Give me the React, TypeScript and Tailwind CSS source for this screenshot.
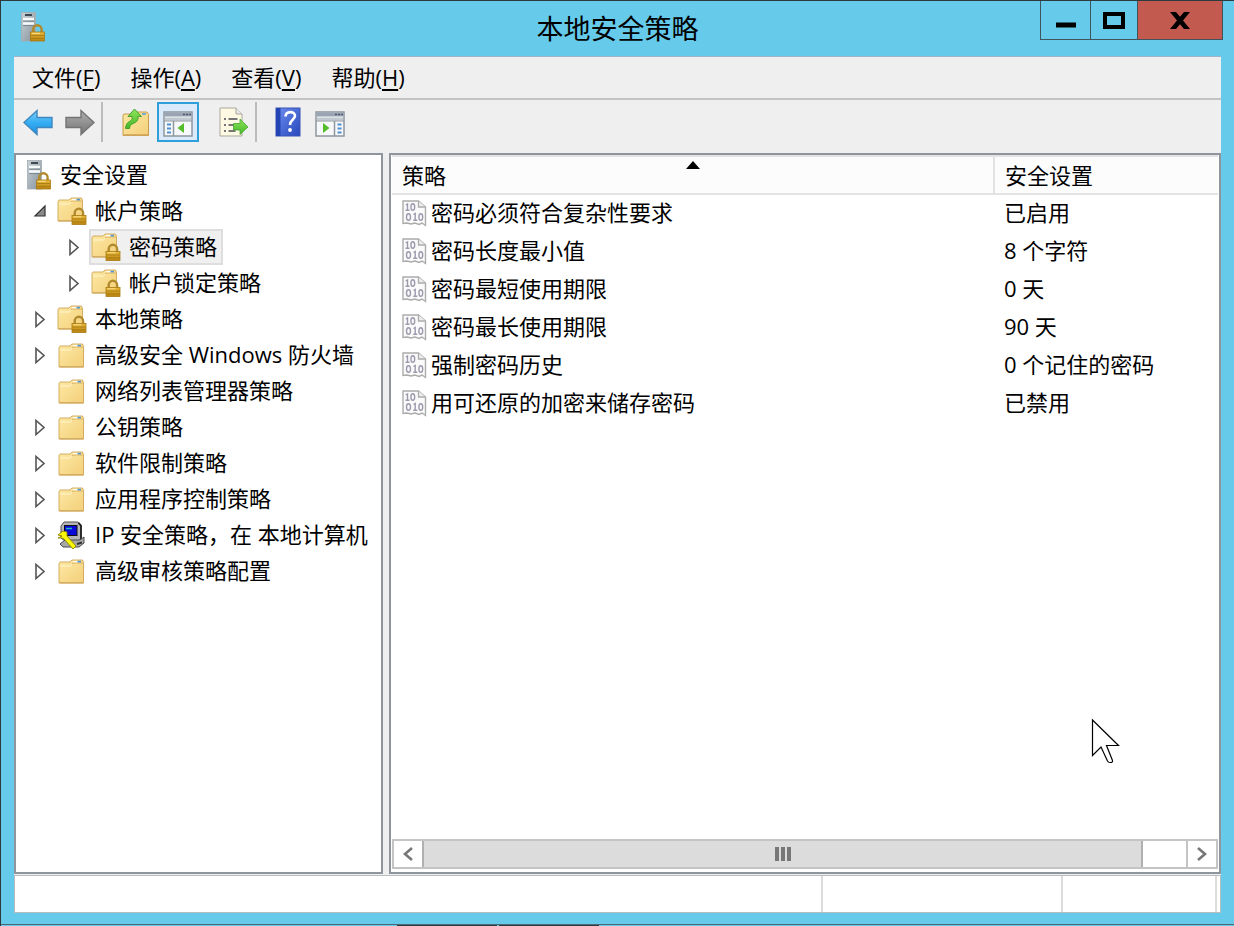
import { useState } from 'react';
import clsx from 'clsx';

type IconKind = 'server' | 'locked' | 'folder' | 'ipsec';

interface TreeNode {
  label: string;
  depth: 0 | 1 | 2;
  icon: IconKind;
  arrow?: 'open' | 'closed';
}

const MENUS = [
  { label: '文件', key: 'F' },
  { label: '操作', key: 'A' },
  { label: '查看', key: 'V' },
  { label: '帮助', key: 'H' },
];

const TREE: TreeNode[] = [
  { label: '安全设置', depth: 0, icon: 'server' },
  { label: '帐户策略', depth: 1, icon: 'locked', arrow: 'open' },
  { label: '密码策略', depth: 2, icon: 'locked', arrow: 'closed' },
  { label: '帐户锁定策略', depth: 2, icon: 'locked', arrow: 'closed' },
  { label: '本地策略', depth: 1, icon: 'locked', arrow: 'closed' },
  { label: '高级安全 Windows 防火墙', depth: 1, icon: 'folder', arrow: 'closed' },
  { label: '网络列表管理器策略', depth: 1, icon: 'folder' },
  { label: '公钥策略', depth: 1, icon: 'folder', arrow: 'closed' },
  { label: '软件限制策略', depth: 1, icon: 'folder', arrow: 'closed' },
  { label: '应用程序控制策略', depth: 1, icon: 'folder', arrow: 'closed' },
  { label: 'IP 安全策略，在 本地计算机', depth: 1, icon: 'ipsec', arrow: 'closed' },
  { label: '高级审核策略配置', depth: 1, icon: 'folder', arrow: 'closed' },
];

const POLICIES = [
  { name: '密码必须符合复杂性要求', value: '已启用' },
  { name: '密码长度最小值', value: '8 个字符' },
  { name: '密码最短使用期限', value: '0 天' },
  { name: '密码最长使用期限', value: '90 天' },
  { name: '强制密码历史', value: '0 个记住的密码' },
  { name: '用可还原的加密来储存密码', value: '已禁用' },
];

// Gradients shared by every icon
function IconDefs() {
  return (
    <svg className="absolute size-0" aria-hidden="true">
      <defs>
        <linearGradient id="gold" x1="0" y1="0" x2="0" y2="1">
          <stop offset="0" stopColor="#e9b93a" />
          <stop offset="1" stopColor="#b8830f" />
        </linearGradient>
        <linearGradient id="paper" x1="0" y1="0" x2="1" y2="1">
          <stop offset="0" stopColor="#fde9a4" />
          <stop offset="1" stopColor="#f3cf7a" />
        </linearGradient>
        <linearGradient id="steel" x1="0" y1="0" x2="1" y2="1">
          <stop offset="0" stopColor="#c9d1d6" />
          <stop offset="1" stopColor="#84919b" />
        </linearGradient>
        <linearGradient id="blue" x1="0" y1="0" x2="0" y2="1">
          <stop offset="0" stopColor="#7fd0fb" />
          <stop offset="0.5" stopColor="#35aef3" />
          <stop offset="1" stopColor="#1c8fe0" />
        </linearGradient>
        <linearGradient id="gray" x1="0" y1="0" x2="0" y2="1">
          <stop offset="0" stopColor="#b0b0b0" />
          <stop offset="1" stopColor="#747474" />
        </linearGradient>
        <linearGradient id="green" x1="0" y1="0" x2="0" y2="1">
          <stop offset="0" stopColor="#8fe45a" />
          <stop offset="1" stopColor="#43b828" />
        </linearGradient>
        <linearGradient id="book" x1="0" y1="0" x2="1" y2="1">
          <stop offset="0" stopColor="#6f8df0" />
          <stop offset="1" stopColor="#2748bd" />
        </linearGradient>
      </defs>
    </svg>
  );
}

function Lock() {
  return (
    <g>
      <path d="M3.2 7V4a4.2 4.2 0 0 1 8.4 0v3" fill="none" stroke="#b08a2c" strokeWidth="2.4" />
      <rect x="0.5" y="6.5" width="14" height="9" fill="url(#gold)" stroke="#a87a14" strokeWidth="0.8" />
      <path d="M1 10h13M1 12.8h13" stroke="#94690c" strokeWidth="0.6" />
      <path d="M2 7.8h8" stroke="#fbe08a" />
    </g>
  );
}

function ServerIcon() {
  return (
    <svg width="26" height="30" viewBox="0 0 26 30" aria-hidden="true">
      <rect x="1.5" y="0.5" width="14" height="28.5" fill="url(#steel)" stroke="#a3adb3" strokeWidth="0.8" />
      <rect x="5" y="2" width="7" height="2" fill="#3d4a50" />
      <path d="M3 7h11M3 11.5h11" stroke="#f7fafb" strokeWidth="2.4" />
      <path d="M3 9.2h11M3 13.6h11" stroke="#6d7a83" strokeWidth="0.8" />
      <g transform="translate(10 13.5)">
        <Lock />
      </g>
    </svg>
  );
}

function FolderIcon({ locked }: { locked?: boolean }) {
  return (
    <svg width="30" height="28" viewBox={locked ? '0 0 30 28' : '-1 -2 30 28'} aria-hidden="true">
      <path d="M1 4.5 2 3h10l2-2h10.5l1 2.5V24H1z" fill="url(#paper)" stroke="#cfa656" strokeWidth="0.9" />
      <path d="M12.5 6.5 15 4h10" fill="none" stroke="#d9b264" />
      <path d="M2.2 7h10.3l1.5-2" fill="none" stroke="#fff6cf" />
      <path d="M15 2.6h5" stroke="#fffdf3" strokeWidth="1.4" />
      <path d="M19.5 2.6h3.5" stroke="#4d97d6" strokeWidth="1.6" />
      <path d="M1.5 23.8h24" stroke="#d2ac62" strokeWidth="1.4" />
      {locked && (
        <g transform="translate(14.5 12)">
          <Lock />
        </g>
      )}
    </svg>
  );
}

function IpsecIcon() {
  return (
    <svg width="30" height="30" viewBox="0 0 30 30" aria-hidden="true">
      <path d="M7 2h14l3 3v14l-3 2H8l-4-3V6z" fill="#b5b5b5" stroke="#555" />
      <path d="M21.5 3 24 5.5V19" fill="none" stroke="#222" strokeWidth="1.8" />
      <rect x="7.5" y="5.5" width="12.5" height="10" fill="#0a0ad8" stroke="#111" />
      <path d="M9 8.5h6" stroke="#20b8c8" strokeWidth="1.5" />
      <path d="M3 24 8 20h15l4-3v6l-5 4H6z" fill="#a8a8a8" stroke="#4a4a4a" />
      <path d="m20 24 5-1.5" stroke="#333" strokeWidth="2" />
      <path d="m1 15 5-4 4 1v4l9 10-3 3L7 19l-2-1H1l4-2z" fill="#fcf607" stroke="#8b8600" strokeWidth="0.9" />
    </svg>
  );
}

function TreeIcon({ kind }: { kind: IconKind }) {
  if (kind === 'server') return <ServerIcon />;
  if (kind === 'ipsec') return <IpsecIcon />;
  return <FolderIcon locked={kind === 'locked'} />;
}

function PolicyIcon() {
  return (
    <svg width="25" height="27" viewBox="0 0 25 27" className="shrink-0" aria-hidden="true">
      <path
        d="M1 1h15.5L23.5 7v18.5L20 23l-3 1.5-4-1.5-4 1-4-1-4 .5z"
        fill="#fafafa"
        stroke="#acacac"
        strokeWidth="1.4"
      />
      <path d="M16.5 1v6h7" fill="#eee" stroke="#acacac" strokeWidth="1.3" />
      <g fill="none" stroke="#9d9aae" strokeWidth="1.4">
        <path d="M3.8 5 5.5 4v6M3.5 10.3h4M11.5 14.5l1.700-1v6.500M11.300 20.300h4" />
        <ellipse cx="10.8" cy="7" rx="1.9" ry="3.2" />
        <ellipse cx="6.5" cy="17" rx="2" ry="3.2" />
        <ellipse cx="18.800" cy="17" rx="1.900" ry="3.200" />
      </g>
    </svg>
  );
}

function ArrowIcon({ forward }: { forward?: boolean }) {
  return (
    <svg width="30" height="28" viewBox="0 0 30 28" aria-hidden="true">
      {forward ? (
        <path d="M1 9.5h15V2.5L29 14.500 16 26.500v-7H1z" fill="url(#gray)" stroke="#737373" strokeWidth="1.4" />
      ) : (
        <path d="M29 9.5H14V2.5L1 14.500l13 12v-7h15z" fill="url(#blue)" stroke="#3f87bd" strokeWidth="1.4" />
      )}
    </svg>
  );
}

function UpIcon() {
  return (
    <svg width="28" height="28" viewBox="0 0 28 28" aria-hidden="true">
      <path d="M1 6 2 5h10l2-2h11l1.500 2.500V26.500H1z" fill="url(#paper)" stroke="#c79c4c" />
      <path d="M20 5h4" stroke="#5aa0dd" strokeWidth="1.6" />
      <path d="M1.500 26h25" stroke="#d0a55a" strokeWidth="1.6" />
      <path
        d="M12.500 0 19.500 7.500l-3.500-.3c.5 5-2 6-5 7.300-2 1-3 2-3.500 5H3.500c.5-4.500 2-6 4-7 2-1.200 3-2 2.500-5L6 7.500z"
        fill="url(#green)"
        stroke="#3c9a28"
        strokeWidth="0.9"
      />
    </svg>
  );
}

function PaneIcon({ side }: { side: 'left' | 'right' }) {
  return (
    <svg width="30" height="26" viewBox="0 0 30 26" aria-hidden="true">
      <rect x="1" y="1" width="28" height="24" fill="#f6f8fa" stroke="#8f979f" strokeWidth="1.5" />
      <rect x="1.5" y="1.5" width="27" height="4" fill="#98a3b3" />
      <path d="M20 3.5h2M23 3.5h2M26 3.5h2" stroke="#4d5a6b" strokeWidth="1.6" />
      <path d="M2 8h26" stroke="#c1c8d0" strokeWidth="3" />
      <path d="M1 10h28" stroke="#8f979f" />
      {side === 'left' ? (
        <>
          <path d="M10.5 10v15" stroke="#8f979f" strokeWidth="1.5" />
          <path d="M4 13.5h4M4 17.5h4M4 21.500h4" stroke="#4d8fd0" strokeWidth="1.8" />
          <path d="M21 12v10l-6.500-5z" fill="#55bd2b" />
        </>
      ) : (
        <>
          <path d="M19.5 10v15" stroke="#8f979f" strokeWidth="1.5" />
          <path d="M22.5 13.5h4M22.5 17.5h4M22.5 21.5h4" stroke="#4d8fd0" strokeWidth="1.8" />
          <path d="M8 12v10l6.500-5z" fill="#55bd2b" />
        </>
      )}
    </svg>
  );
}

function ExportIcon() {
  return (
    <svg width="30" height="30" viewBox="0 0 30 30" aria-hidden="true">
      <path d="M1 1h16l6 6v22H1z" fill="#fdf9e3" stroke="#a9a79c" />
      <path d="M17 1v6h6" fill="#e9e9e9" stroke="#a9a79c" />
      <path d="M5 12h2M5 18h2M5 24h2M9.5 12h9M9.5 18h6M9.5 24h7" stroke="#4c4a55" strokeWidth="1.5" />
      <path d="M14.5 16.500h6.500v-4.500l8 8-8 7.500v-4.500h-6.500z" fill="url(#green)" stroke="#48a634" strokeWidth="0.8" />
    </svg>
  );
}

function HelpIcon() {
  return (
    <svg width="26" height="30" viewBox="0 0 26 30" aria-hidden="true">
      <rect x="1" y="1" width="24" height="28" fill="url(#book)" stroke="#3b55b2" />
      <rect x="1" y="1" width="4.5" height="28" fill="#2344b4" />
      <path
        d="M10.5 9.5c.3-6 9.500-5.500 9.500-.8 0 3.800-5 4-5 9.300"
        fill="none"
        stroke="#fff"
        strokeWidth="2.6"
      />
      <circle cx="15" cy="23" r="1.9" fill="#fff" />
    </svg>
  );
}

function Twisty({ state }: { state?: 'open' | 'closed' }) {
  return (
    <span className="flex w-6 shrink-0 justify-center">
      {state === 'closed' && (
        <svg width="12" height="18" viewBox="0 0 12 18" aria-hidden="true">
          <path d="M2 2.5v14l8-7z" fill="#fff" stroke="#555" strokeWidth="1.6" />
        </svg>
      )}
      {state === 'open' && (
        <svg width="14" height="14" viewBox="0 0 14 14" aria-hidden="true">
          <path d="M12 2v10H2z" fill="#8a8a8a" stroke="#333" strokeWidth="1.2" />
        </svg>
      )}
    </span>
  );
}

function TitleBar() {
  return (
    <header className="grid h-[55px] grid-cols-[1fr_auto_1fr] px-[11px]">
      <div className="pt-[11px] pl-2">
        <ServerIcon />
      </div>
      <h1 className="text-[27px] leading-[56px]">本地安全策略</h1>
      <div className="flex h-[39px] justify-self-end border-x border-b border-[#41535c]">
        <button aria-label="最小化" className="flex w-[50px] items-center justify-center border-r border-[#41535c]">
          <svg width="20" height="16" viewBox="0 0 20 16">
            <path d="M0 13h20" stroke="#000" strokeWidth="5" />
          </svg>
        </button>
        <button aria-label="最大化" className="flex w-[47px] items-center justify-center border-r border-[#41535c]">
          <svg width="22" height="17" viewBox="0 0 22 17">
            <path d="M2 2h18v13H2z" fill="none" stroke="#000" strokeWidth="4" />
          </svg>
        </button>
        <button aria-label="关闭" className="flex w-[84px] items-center justify-center bg-[#c25a50]">
          <svg width="20" height="17" viewBox="0 0 20 17">
            <path d="M0 0h6l4 4.800L14 0h6l-7 8.500 7 8.500h-6l-4-4.800L6 17H0l7-8.500z" />
          </svg>
        </button>
      </div>
    </header>
  );
}

function Toolbar() {
  const tool = 'flex w-[42px] h-10 shrink-0 items-center justify-center';
  return (
    <div role="toolbar" className="flex h-[53px] items-start bg-[#efefef] pt-0.5 pl-[3px]">
      <button aria-label="后退" className={tool}>
        <ArrowIcon />
      </button>
      <button aria-label="前进" className={tool}>
        <ArrowIcon forward />
      </button>
      <span className="mr-3 h-10 w-0.5 bg-[#bcbcbc]" />
      <button aria-label="上移一级" className={clsx(tool, 'pt-0.5')}>
        <UpIcon />
      </button>
      <button aria-label="显示/隐藏控制台树" className={clsx(tool, 'border-2 border-[#2f9fdc] bg-[#dbeafb] pt-1')}>
        <PaneIcon side="left" />
      </button>
      <button aria-label="导出列表" className={clsx(tool, 'ml-3.5')}>
        <ExportIcon />
      </button>
      <span className="mr-2.5 h-10 w-0.5 bg-[#bcbcbc]" />
      <button aria-label="帮助" className={tool}>
        <HelpIcon />
      </button>
      <button aria-label="显示/隐藏操作窗格" className={clsx(tool, 'pt-1')}>
        <PaneIcon side="right" />
      </button>
    </div>
  );
}

function ScrollBar() {
  const end = 'flex w-7 shrink-0 items-center justify-center';
  return (
    <div className="flex h-[30px] border-2 border-[#c4c4c4] bg-white">
      <button aria-label="向左滚动" className={end}>
        <svg width="12" height="14" viewBox="0 0 12 14">
          <path d="M10 1 3 7l7 6" fill="none" stroke="#777" strokeWidth="2.6" />
        </svg>
      </button>
      <div className="flex flex-1 items-center justify-center gap-0.5 border-x-2 border-[#b0b0b0] bg-[#dcdcdc]">
        <span className="h-3.5 w-1 bg-[#777]" />
        <span className="h-3.5 w-1 bg-[#777]" />
        <span className="h-3.5 w-1 bg-[#777]" />
      </div>
      <div className="w-[45px] border-r-2 border-[#c4c4c4]" />
      <button aria-label="向右滚动" className={end}>
        <svg width="12" height="14" viewBox="0 0 12 14">
          <path d="m2 1 7 6-7 6" fill="none" stroke="#777" strokeWidth="2.6" />
        </svg>
      </button>
    </div>
  );
}

export default function App() {
  const [selected, setSelected] = useState('密码策略');

  return (
    <div className="relative flex min-h-screen flex-col overflow-hidden border-t border-l border-[#2f3a40] bg-[#66caea] font-['Open_Sans','Noto_Sans_CJK_SC',sans-serif] text-[22px] text-black select-none">
      <IconDefs />
      <TitleBar />

      <main className="mr-[13px] ml-[13px] flex flex-1 flex-col border-t border-[#9fb4c8] bg-[#efefef]">
        <nav className="flex h-[43px] items-start gap-[30px] border-b-2 border-[#c3c3c3] pl-[18px] leading-10">
          {MENUS.map(m => (
            <button key={m.key}>
              {m.label}(<span className="underline underline-offset-3">{m.key}</span>)
            </button>
          ))}
        </nav>
        <Toolbar />

        <div className="flex flex-1 gap-1.5">
          <ul role="tree" className="w-[369px] shrink-0 border-2 border-[#8e959c] bg-white pt-0.5">
            {TREE.map(node => (
              <li
                key={node.label}
                role="treeitem"
                aria-selected={selected === node.label}
                onClick={() => setSelected(node.label)}
                className={clsx(
                  'flex h-9 items-center gap-[3px]',
                  node.depth === 0 && 'pl-2',
                  node.depth === 1 && 'pl-3',
                  node.depth === 2 && 'pl-[46px]',
                )}
              >
                {node.depth > 0 && <Twisty state={node.arrow} />}
                <span
                  className={clsx(
                    'flex h-9 items-center gap-2 border-2 pr-1 whitespace-nowrap',
                    selected === node.label ? 'border-[#dedede] bg-[#f0f0f0]' : 'border-transparent',
                  )}
                >
                  <TreeIcon kind={node.icon} />
                  <span className="pb-0.5">{node.label}</span>
                </span>
              </li>
            ))}
          </ul>

          <section className="flex min-w-0 flex-1 flex-col border-2 border-[#8e959c] bg-white px-px pb-[3px]">
            <table className="w-full table-fixed text-left">
              <colgroup>
                <col className="w-[602px]" />
                <col />
              </colgroup>
              <thead>
                <tr className="h-[38px] border-y-2 border-[#e3e3e3] bg-[#fcfcfc]">
                  <th className="relative border-r-2 border-[#e3e3e3] pl-2.5 font-normal">
                    策略
                    <svg
                      width="14"
                      height="8"
                      viewBox="0 0 14 8"
                      className="absolute top-1 left-1/2 -translate-x-1/2"
                      aria-hidden="true"
                    >
                      <path d="M7 0 14 8H0z" />
                    </svg>
                  </th>
                  <th className="pl-2.5 font-normal">安全设置</th>
                </tr>
              </thead>
              <tbody>
                {POLICIES.map(p => (
                  <tr key={p.name} className="h-[38px]">
                    <td className="pl-2.5">
                      <span className="flex items-center gap-1">
                        <PolicyIcon />
                        <span className="pb-0.5">{p.name}</span>
                      </span>
                    </td>
                    <td className="pb-0.5 pl-2.5">{p.value}</td>
                  </tr>
                ))}
              </tbody>
            </table>
            <div className="flex-1" />
            <ScrollBar />
          </section>
        </div>

        <footer className="mt-px flex h-[38px] border border-[#b9bcbe] bg-white">
          <div className="flex-1 border-r-2 border-[#dcdcdc]" />
          <div className="w-60 border-r-2 border-[#dcdcdc]" />
          <div className="w-[154px] border-r-2 border-[#dcdcdc]" />
          <div className="w-[3px]" />
        </footer>
      </main>

      {/* Top edge of the taskbar under the window */}
      <div className="mt-[11px] flex h-0.5 gap-0.5 border-t border-[#4b6874] pl-[396px]">
        <span className="w-[100px] bg-[#2f3a40]" />
        <span className="w-[100px] bg-[#2f3a40]" />
      </div>

      {/* Mouse pointer */}
      <svg
        width="30"
        height="46"
        viewBox="0 0 30 46"
        className="pointer-events-none absolute top-[717px] left-[1090px]"
        aria-hidden="true"
      >
        <path
          d="M1.500 2v35.500l8.500-8.500 6.500 14q.8 1.500 2.500 1.500h1.500q1.500-.5 1-2L15.500 27.500H27.500z"
          fill="#fff"
          stroke="#000"
          strokeWidth="1.2"
        />
      </svg>
    </div>
  );
}
